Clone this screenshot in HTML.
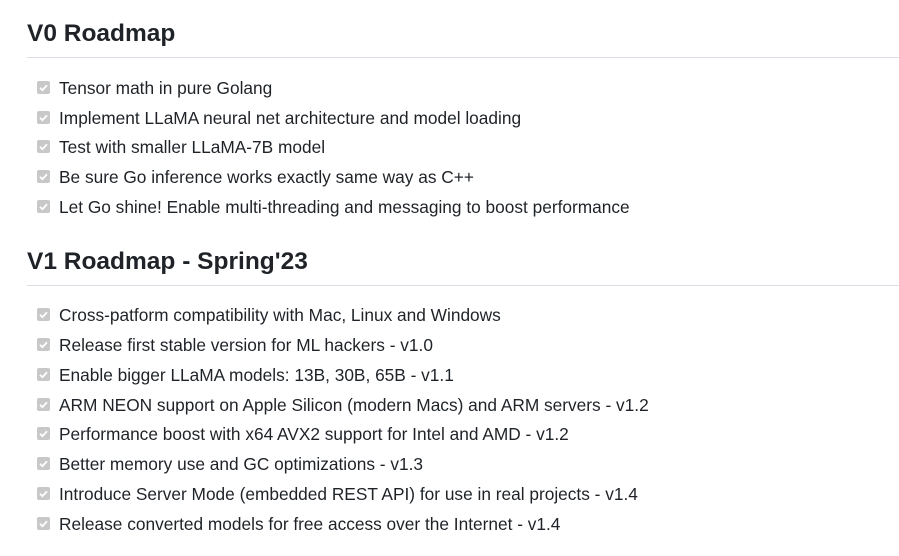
<!DOCTYPE html>
<html><head><style>
body{margin:0;background:#fff;width:899px;height:556px;overflow:hidden;font-family:"Liberation Sans",sans-serif;color:#1f2328;position:relative}
h2{position:absolute;left:27px;margin:0;font-size:24.5px;font-weight:bold;line-height:30px}
.rule{position:absolute;left:27px;right:0;height:1px;background:#d8dee4}
.row{position:absolute;left:37px;height:30px;line-height:30px;font-size:17.3px;white-space:nowrap}
.cb{display:inline-block;width:13px;height:13px;border-radius:2px;background:#c8c8c8;vertical-align:middle;margin-right:9px;position:relative;top:-2px}
.cb svg{position:absolute;left:0;top:0}
</style></head><body>
<h2 style="top:19px">V0 Roadmap</h2>
<div class="rule" style="top:57px"></div>
<h2 style="top:247px">V1 Roadmap - Spring'23</h2>
<div class="rule" style="top:285px"></div>
<div id="rows"></div>
<script>
var ck='<span class="cb"><svg width="13" height="13" viewBox="0 0 13 13"><path d="M3 6.8l2.4 2.4L10 4.3" stroke="#fff" stroke-width="1.8" fill="none"/></svg></span>';
var a=[[73,"Tensor math in pure Golang"],[103,"Implement LLaMA neural net architecture and model loading"],[132,"Test with smaller LLaMA-7B model"],[162,"Be sure Go inference works exactly same way as C++"],[192,"Let Go shine! Enable multi-threading and messaging to boost performance"],
[300,"Cross-patform compatibility with Mac, Linux and Windows"],[330,"Release first stable version for ML hackers - v1.0"],[360,"Enable bigger LLaMA models: 13B, 30B, 65B - v1.1"],[390,"ARM NEON support on Apple Silicon (modern Macs) and ARM servers - v1.2"],[419,"Performance boost with x64 AVX2 support for Intel and AMD - v1.2"],[449,"Better memory use and GC optimizations - v1.3"],[479,"Introduce Server Mode (embedded REST API) for use in real projects - v1.4"],[509,"Release converted models for free access over the Internet - v1.4"]];
var h='';a.forEach(function(r){h+='<div class="row" style="top:'+r[0]+'px">'+ck+r[1]+'</div>'});
document.getElementById('rows').innerHTML=h;
</script>
</body></html>
